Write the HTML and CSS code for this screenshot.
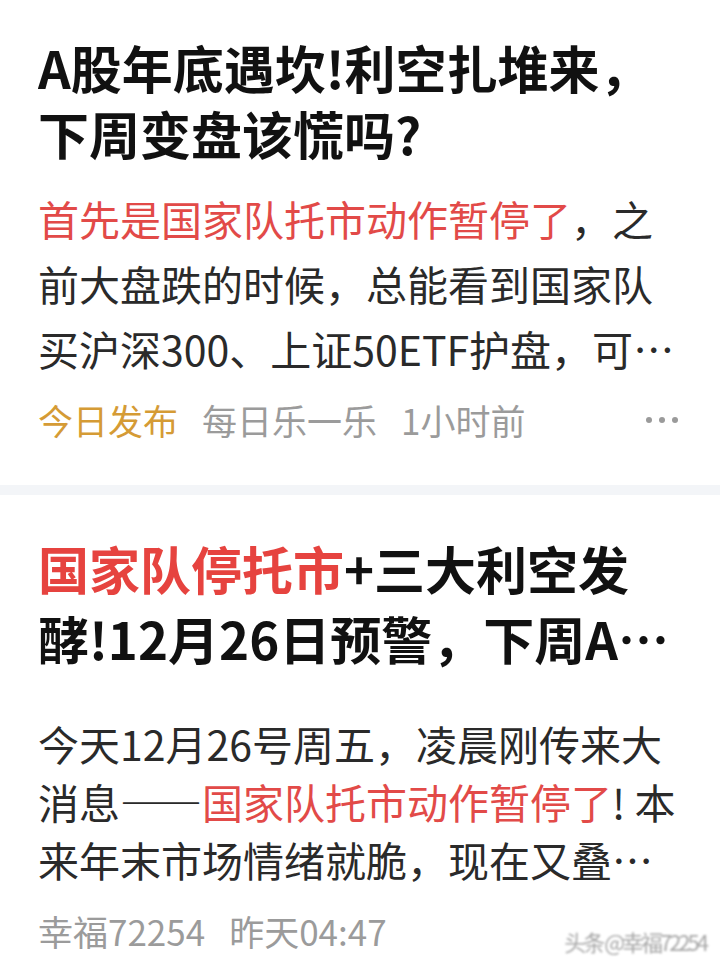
FILE: index.html
```html
<!DOCTYPE html>
<html lang="zh-CN">
<head>
<meta charset="utf-8">
<title>资讯</title>
<link rel="stylesheet" href="styles.css">
</head>
<body>
<main class="feed">
  <article class="card card-first">
    <h2 class="title">A股年底遇坎!利空扎堆来，下周变盘该慌吗?</h2>
    <p class="summary"><span class="hl">首先是国家队托市动作暂停了</span>，之前大盘跌的时候，总能看到国家队买沪深300、上证50ETF护盘，可是这次却迟迟没有出手，市场情绪一下子就紧张起来了。</p>
    <div class="meta">
      <span class="tag">今日发布</span>
      <span class="meta-item">每日乐一乐</span>
      <span class="meta-item">1小时前</span>
      <span class="more" aria-label="更多"><i></i><i></i><i></i></span>
    </div>
  </article>
  <div class="divider"></div>
  <article class="card card-second">
    <h2 class="title"><span class="hl-strong">国家队停托市</span>+三大利空发酵!12月26日预警，下周A股怎么走？</h2>
    <p class="summary"><span>今天12月26号周五，凌晨刚传来大消息——</span><span class="hl">国家队托市动作暂停了</span><span>! 本来年末市场情绪就脆，现在又叠加了三大利空，下周行情怎么走？</span></p>
    <div class="meta">
      <span class="meta-item">幸福72254</span>
      <span class="meta-item">昨天04:47</span>
    </div>
  </article>
  <div class="watermark">头条 @幸福72254</div>
</main>
</body>
</html>
```
FILE: styles.css
```css
* { box-sizing: border-box; }
html, body { margin: 0; padding: 0; background: #ffffff; }
body {
  font-family: "Noto Sans CJK SC", "Noto Sans", sans-serif;
  color: #222;
}
.feed {
  position: relative;
  width: 720px;
  min-height: 973px;
  overflow: hidden;
}
.card {
  padding: 0 38px;
}
.card-first { padding-top: 34px; padding-bottom: 40px; }
.card-second { padding-top: 38px; }
.title {
  margin: 0;
  font-size: 51px;
  line-height: 66px;
  font-weight: 700;
  color: #111;
  display: -webkit-box;
  -webkit-box-orient: vertical;
  -webkit-line-clamp: 2;
  overflow: hidden;
}
.card-second .title { line-height: 70px; }
.hl-strong { color: #e6433f; }
.summary {
  margin: 20px 0 0;
  font-size: 41px;
  line-height: 65px;
  font-weight: 400;
  color: #2a2a2a;
  display: -webkit-box;
  -webkit-box-orient: vertical;
  -webkit-line-clamp: 3;
  overflow: hidden;
}
.card-second .summary { margin-top: 41px; line-height: 58px; }
.hl { color: #e24a48; }
.meta {
  margin-top: 14px;
  display: flex;
  align-items: center;
  gap: 24px;
  font-size: 35px;
  line-height: 50px;
  color: #9b9b9b;
}
.card-second .meta { margin-top: 18px; }
.tag { color: #d59b35; }
.more {
  margin-left: auto;
  display: flex;
  gap: 7px;
  margin-right: 4px;
}
.more i {
  display: block;
  width: 6px;
  height: 6px;
  border-radius: 50%;
  background: #9a9a9a;
}
.divider {
  height: 10px;
  background: #f3f5f8;
}
.watermark {
  position: absolute;
  right: 14px;
  bottom: 16px;
  font-size: 22px;
  color: #8a8a8a;
  letter-spacing: -3px;
  filter: blur(1px);
  opacity: 0.75;
}
```
